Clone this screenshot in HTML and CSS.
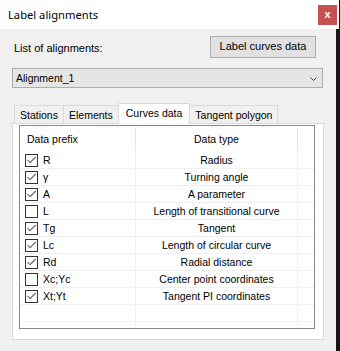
FILE: index.html
```html
<!DOCTYPE html>
<html lang="en">
<head>
  <meta charset="UTF-8" />
  <title>Label alignments</title>
  <link rel="stylesheet" href="styles.css">
</head>
<body>
  <!-- Barra de título -->
  <div class="titlebar">
    <span class="title">Label alignments</span>
    <span class="close">x</span>
  </div>

  <div class="content">
    <div class="top-row">
      <span class="label">List of alignments:</span>
      <button class="btn">Label curves data</button>
    </div>

    <div class="combo">
      <span>Alignment_1</span>
      <svg width="7" height="4" viewBox="0 0 7 4"><polyline points="0.5,0.5 3.5,3.5 6.5,0.5" fill="none" stroke="#444" stroke-width="1"/></svg>
    </div>

    <!-- Pestañas -->
    <div class="tabs">
      <div class="tab">Stations</div>
      <div class="tab">Elements</div>
      <div class="tab active">Curves data</div>
      <div class="tab">Tangent polygon</div>
    </div>

    <div class="panel">
      <div class="grid">
        <div class="grid-head">
          <span class="h-prefix">Data prefix</span>
          <span class="h-type">Data type</span>
          <span class="h-fill"></span>
        </div>

        <div class="row">
          <span class="prefix"><span class="box checked"><svg width="11" height="11" viewBox="0 0 11 11"><polyline points="1.5,5 4,7.7 9.7,2" fill="none" stroke="#666" stroke-width="1.1"/></svg></span>R</span>
          <span class="type">Radius</span><span></span>
        </div>
        <div class="row">
          <span class="prefix"><span class="box checked"><svg width="11" height="11" viewBox="0 0 11 11"><polyline points="1.5,5 4,7.7 9.7,2" fill="none" stroke="#666" stroke-width="1.1"/></svg></span>γ</span>
          <span class="type">Turning angle</span><span></span>
        </div>
        <div class="row">
          <span class="prefix"><span class="box checked"><svg width="11" height="11" viewBox="0 0 11 11"><polyline points="1.5,5 4,7.7 9.7,2" fill="none" stroke="#666" stroke-width="1.1"/></svg></span>A</span>
          <span class="type">A parameter</span><span></span>
        </div>
        <div class="row">
          <span class="prefix"><span class="box"></span>L</span>
          <span class="type">Length of transitional curve</span><span></span>
        </div>
        <div class="row">
          <span class="prefix"><span class="box checked"><svg width="11" height="11" viewBox="0 0 11 11"><polyline points="1.5,5 4,7.7 9.7,2" fill="none" stroke="#666" stroke-width="1.1"/></svg></span>Tg</span>
          <span class="type">Tangent</span><span></span>
        </div>
        <div class="row">
          <span class="prefix"><span class="box checked"><svg width="11" height="11" viewBox="0 0 11 11"><polyline points="1.5,5 4,7.7 9.7,2" fill="none" stroke="#666" stroke-width="1.1"/></svg></span>Lc</span>
          <span class="type">Length of circular curve</span><span></span>
        </div>
        <div class="row">
          <span class="prefix"><span class="box checked"><svg width="11" height="11" viewBox="0 0 11 11"><polyline points="1.5,5 4,7.7 9.7,2" fill="none" stroke="#666" stroke-width="1.1"/></svg></span>Rd</span>
          <span class="type">Radial distance</span><span></span>
        </div>
        <div class="row">
          <span class="prefix"><span class="box"></span>Xc;Yc</span>
          <span class="type">Center point coordinates</span><span></span>
        </div>
        <div class="row">
          <span class="prefix"><span class="box checked"><svg width="11" height="11" viewBox="0 0 11 11"><polyline points="1.5,5 4,7.7 9.7,2" fill="none" stroke="#666" stroke-width="1.1"/></svg></span>Xt;Yt</span>
          <span class="type">Tangent PI coordinates</span><span></span>
        </div>
        <!-- filas vacías -->
        <div class="row"><span></span><span></span><span></span></div>
        <div class="row"><span></span><span></span><span></span></div>
      </div>
    </div>
  </div>
</body>
</html>
```

FILE: styles.css
```css
/* Reset básico */
* {
  box-sizing: border-box;
}

body {
  margin: 0;
  background: #161616;
  font-family: 'Liberation Sans', Arial, sans-serif;
  font-size: 11px;
  color: #000;
}

.titlebar {
  width: 339px;
  height: 29px;
  background: #fff;
  display: flex;
  justify-content: space-between;
  align-items: flex-start;
}

.title {
  font-family: 'Noto Sans', sans-serif;
  font-size: 11.2px;
  line-height: 29px;
  padding-left: 8px;
}

.close {
  width: 19px;
  height: 20px;
  margin: 5px 2px 0 0;
  background: #c75050;
  color: #fff;
  font-weight: bold;
  font-size: 11px;
  line-height: 18px;
  text-align: center;
}

.content {
  width: 336px;
  height: 322px;
  background: #f0f0f0;
  overflow: hidden;
}

.top-row {
  display: flex;
  justify-content: space-between;
  align-items: flex-start;
  margin: 7px 20px 0 14px;
}

.label {
  margin-top: 6px;
  line-height: 13px;
}

.btn {
  width: 106px;
  height: 22px;
  border: 1px solid #adadad;
  background: #e1e1e1;
  font: inherit;
  line-height: 18px;
  padding: 0 0 2px;
  color: #000;
}

.combo {
  margin: 10px 13px 0 12px;
  height: 20px;
  border: 1px solid #adadad;
  background: #e5e5e5;
  display: flex;
  justify-content: space-between;
  align-items: flex-start;
  padding: 1px 5px 0 3px;
  font-size: 10.5px;
  line-height: 17px;
}

.combo svg {
  align-self: center;
}

.tabs {
  display: flex;
  align-items: flex-end;
  height: 20px;
  margin: 15px 0 0 14px;
}

.tab {
  height: 18px;
  border: 1px solid #d9d9d9;
  border-bottom: 0;
  margin-right: -1px;
  padding: 1px 5px 0;
  line-height: 17px;
  font-size: 10.5px;
  background: #f0f0f0;
}

.tab.active {
  height: 21px;
  margin-bottom: -1px;
  padding: 1px 7px 0;
  background: #fff;
  position: relative;
  z-index: 1;
}

.panel {
  margin: 0 12px;
  height: 217px;
  border: 1px solid #d9d9d9;
  background: #fff;
  padding: 1px 8px 0 6px;
}

.grid {
  height: 204px;
  border: 1px solid #828790;
  overflow: hidden;
  font-size: 10.5px;
}

.grid-head,
.row {
  display: grid;
  grid-template-columns: 116px 162px 1fr;
}

.grid-head {
  height: 26px;
  align-items: center;
}

.grid-head span {
  height: 23px;
  line-height: 23px;
  border-right: 1px solid #e5e5e5;
}

.grid-head .h-fill {
  border-right: 0;
}

.h-prefix {
  padding-left: 7px;
}

.h-type {
  text-align: center;
}

.row {
  height: 17px;
  border-bottom: 1px solid #f0f0f0;
  line-height: 16px;
}

.row > span {
  border-right: 1px solid #f0f0f0;
}

.row > span:last-child {
  border-right: 0;
}

.prefix {
  display: flex;
  align-items: center;
  gap: 5px;
  padding-left: 5px;
}

.box {
  width: 13px;
  height: 13px;
  border: 1px solid #333;
  background: #fff;
}

.box svg {
  display: block;
}

.type {
  text-align: center;
}
```
